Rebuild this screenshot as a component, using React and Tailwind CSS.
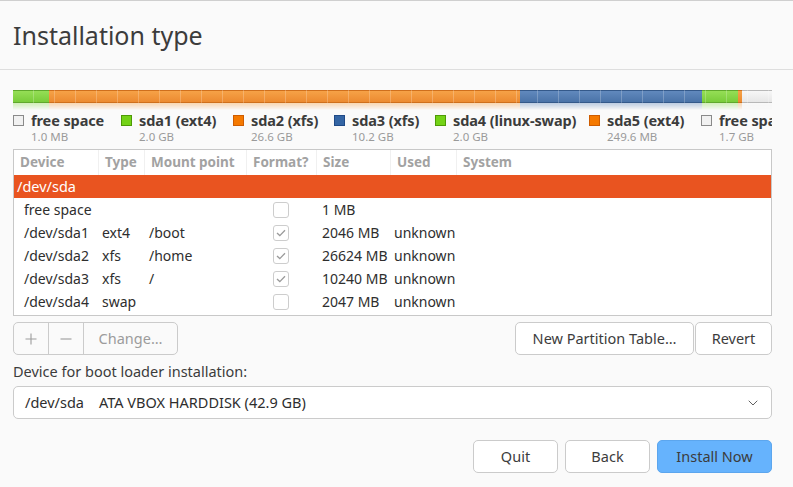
import React from "react";
import { ChevronDown } from "lucide-react";

const bar = [
  { w: "w-[36px]", cls: "bg-[linear-gradient(to_bottom,#95de56,#79cc3a)] border-[#5fa82c]" },
  { w: "w-[471px]", cls: "bg-[linear-gradient(to_bottom,#f6a247,#ec8a30)] border-[#cf6f1c]" },
  { w: "w-[182px]", cls: "bg-[linear-gradient(to_bottom,#6189bd,#4a73a8)] border-[#34598a]" },
  { w: "w-[36px]", cls: "bg-[linear-gradient(to_bottom,#95de56,#79cc3a)] border-[#5fa82c]" },
  { w: "w-[4px]", cls: "bg-[linear-gradient(to_bottom,#f6a247,#ec8a30)] border-[#cf6f1c]" },
  { w: "w-[30px]", cls: "bg-[linear-gradient(to_bottom,#f7f7f7,#e6e6e6)] border-[#b8b8b8]" },
];

const legend = [
  { w: "w-[108px]", sq: "bg-[#f1f1f1] border-[#8a8a8a]", label: "free space", size: "1.0 MB" },
  { w: "w-[112px]", sq: "bg-[#73d216] border-[#4e9a06]", label: "sda1 (ext4)", size: "2.0 GB" },
  { w: "w-[101px]", sq: "bg-[#f57900] border-[#ce5c00]", label: "sda2 (xfs)", size: "26.6 GB" },
  { w: "w-[101px]", sq: "bg-[#3465a4] border-[#204a87]", label: "sda3 (xfs)", size: "10.2 GB" },
  { w: "w-[154px]", sq: "bg-[#73d216] border-[#4e9a06]", label: "sda4 (linux-swap)", size: "2.0 GB" },
  { w: "w-[112px]", sq: "bg-[#f57900] border-[#ce5c00]", label: "sda5 (ext4)", size: "249.6 MB" },
  { w: "w-[120px]", sq: "bg-[#f1f1f1] border-[#8a8a8a]", label: "free space", size: "1.7 GB" },
];

const cols = [
  { w: "w-[85px]", label: "Device" },
  { w: "w-[46px]", label: "Type" },
  { w: "w-[102px]", label: "Mount point" },
  { w: "w-[70px]", label: "Format?" },
  { w: "w-[74px]", label: "Size" },
  { w: "w-[66px]", label: "Used" },
  { w: "flex-1", label: "System" },
];

const rows = [
  { dev: "free space", type: "", mount: "", checked: false, size: "1 MB", used: "" },
  { dev: "/dev/sda1", type: "ext4", mount: "/boot", checked: true, size: "2046 MB", used: "unknown" },
  { dev: "/dev/sda2", type: "xfs", mount: "/home", checked: true, size: "26624 MB", used: "unknown" },
  { dev: "/dev/sda3", type: "xfs", mount: "/", checked: true, size: "10240 MB", used: "unknown" },
  { dev: "/dev/sda4", type: "swap", mount: "", checked: false, size: "2047 MB", used: "unknown" },
];

function Check({ checked }) {
  return (
    <div className="w-[16px] h-[16px] rounded-[3px] border border-[#cdcdcd] bg-white flex items-center justify-center">
      {checked && (
        <svg width="10" height="8" viewBox="0 0 10 8">
          <path d="M1 4 L3.8 6.6 L9 1.2" fill="none" stroke="#9a9a9a" strokeWidth="1.3" />
        </svg>
      )}
    </div>
  );
}

function Btn({ children, cls = "", tone = "bg-white border-[#cbcbcb]" }) {
  return (
    <div className={"h-[33px] flex items-center justify-center rounded-[5px] border text-[14.5px] text-[#3c3c3c] " + tone + " " + cls}>
      {children}
    </div>
  );
}

export default function App() {
  return (
    <div className="w-[793px] h-[487px] overflow-hidden bg-[#fafafa] font-['Noto_Sans',sans-serif] text-[#3c3c3c] border-t border-[#cfcfcf]">
      <div className="h-[69px] border-b border-[#dedede] pl-[13px] flex items-center pt-[1px]">
        <div className="text-[25px] text-[#3c3c3c]">Installation type</div>
      </div>

      <div className="pl-[13px] pr-[21px]">
        <div className="relative mt-[20px] flex h-[13px]">
          {bar.map((s, i) => (
            <div key={i} className={"h-full border-y " + s.w + " " + s.cls} />
          ))}
          <div className="absolute inset-0 bg-[repeating-linear-gradient(90deg,transparent_0,transparent_20px,rgba(255,255,255,0.22)_20px,rgba(255,255,255,0.22)_21px)]" />
        </div>
        <div className="flex h-[7px] opacity-40 [mask-image:linear-gradient(to_bottom,black,transparent)]">
          {bar.map((s, i) => (
            <div key={i} className={"h-full " + s.w + " " + s.cls} />
          ))}
        </div>

        <div className="flex overflow-hidden h-[39px]">
          {legend.map((l, i) => (
            <div key={i} className={"shrink-0 flex " + l.w}>
              <div className={"mt-[5px] w-[11px] h-[11px] border shrink-0 " + l.sq} />
              <div className="ml-[7px] whitespace-nowrap">
                <div className="text-[14.5px] font-bold leading-[20px] text-[#3c3c3c] tracking-[-0.1px]">{l.label}</div>
                <div className="text-[11.5px] leading-[14px] text-[#9a9a9a]">{l.size}</div>
              </div>
            </div>
          ))}
        </div>

        <div className="h-[167px] border border-[#c8c8c8] bg-white flex flex-col">
          <div className="flex h-[25px] shrink-0">
            {cols.map((c, i) => (
              <div key={i} className={"h-full flex items-center pl-[6px] text-[13.5px] font-bold text-[#a2a2a2] " + c.w + (i < cols.length - 1 ? " border-r border-[#f0f0f0]" : "")}>
                {c.label}
              </div>
            ))}
          </div>
          <div className="h-[23px] bg-[#e95420] text-white text-[14.5px] flex items-center pl-[3px]">/dev/sda</div>
          {rows.map((r, i) => (
            <div key={i} className="h-[23px] flex items-center text-[14px] text-[#2e2e2e]">
              <div className="w-[88px] pl-[10px] whitespace-nowrap">{r.dev}</div>
              <div className="w-[47px]">{r.type}</div>
              <div className="w-[124px]">{r.mount}</div>
              <div className="w-[49px] flex"><Check checked={r.checked} /></div>
              <div className="w-[72px] whitespace-nowrap">{r.size}</div>
              <div className="flex-1">{r.used}</div>
            </div>
          ))}
        </div>

        <div className="mt-[6px] flex justify-between">
          <div className="flex h-[33px] rounded-[5px] border border-[#cbcbcb] bg-[#fafafa] text-[#9c9c9c]">
            <div className="w-[35px] flex items-center justify-center border-r border-[#cbcbcb]">
              <svg width="12" height="12" viewBox="0 0 12 12"><path d="M6 0.5V11.5M0.5 6H11.5" stroke="#9c9c9c" strokeWidth="1.1" /></svg>
            </div>
            <div className="w-[35px] flex items-center justify-center border-r border-[#cbcbcb]">
              <svg width="12" height="12" viewBox="0 0 12 12"><path d="M0.5 6H11.5" stroke="#9c9c9c" strokeWidth="1.1" /></svg>
            </div>
            <div className="w-[93px] flex items-center justify-center text-[14.5px]">Change…</div>
          </div>
          <div className="flex gap-[1px]">
            <Btn cls="w-[179px]">New Partition Table…</Btn>
            <Btn cls="w-[77px]">Revert</Btn>
          </div>
        </div>

        <div className="mt-[6px] text-[14.5px] leading-[20px] text-[#3c3c3c]">Device for boot loader installation:</div>

        <div className="mt-[5px] h-[33px] rounded-[5px] border border-[#cbcbcb] bg-white flex items-center justify-between pl-[11px] pr-[10px] text-[14.5px] text-[#2e2e2e]">
          <div className="whitespace-pre">/dev/sda    ATA VBOX HARDDISK (42.9 GB)</div>
          <ChevronDown size={16} strokeWidth={1.4} color="#555" />
        </div>

        <div className="mt-[21px] flex justify-end gap-[7px]">
          <Btn cls="w-[85px]">Quit</Btn>
          <Btn cls="w-[85px]">Back</Btn>
          <Btn cls="w-[115px]" tone="bg-[#66b3fd] border-[#5ca6ee]">Install Now</Btn>
        </div>
      </div>
    </div>
  );
}
